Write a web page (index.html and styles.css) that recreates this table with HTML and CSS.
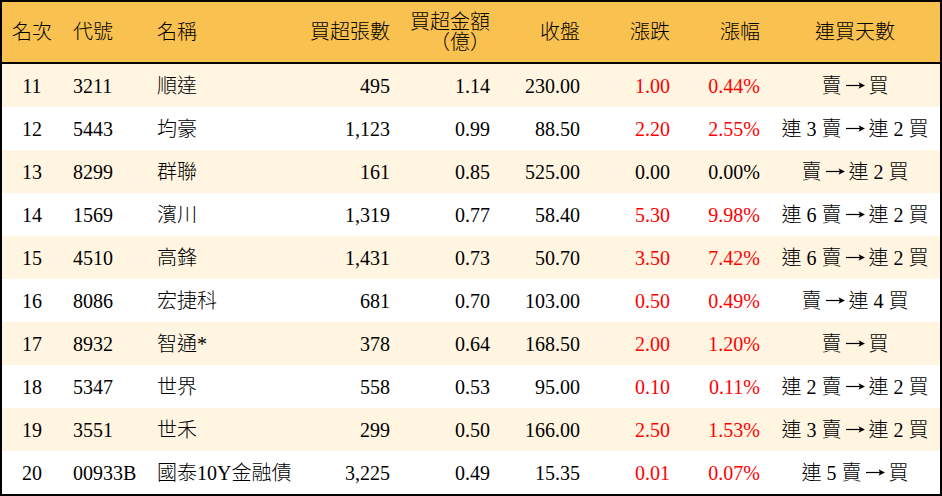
FILE: index.html
```html
<!DOCTYPE html>
<html lang="zh-Hant">
<head>
<meta charset="utf-8">
<title>買超排行</title>
<link rel="stylesheet" href="styles.css">
</head>
<body>
<div class="frame">
<table class="rank">
  <colgroup>
    <col class="w-rank"><col class="w-code"><col class="w-name"><col class="w-vol"><col class="w-amt"><col class="w-close"><col class="w-chg"><col class="w-pct"><col class="w-days">
  </colgroup>
  <thead>
    <tr>
      <th class="c">名次</th>
      <th class="l">代號</th>
      <th class="l">名稱</th>
      <th class="r">買超張數</th>
      <th class="r">買超金額<br>（億）</th>
      <th class="r">收盤</th>
      <th class="r">漲跌</th>
      <th class="r">漲幅</th>
      <th class="c">連買天數</th>
    </tr>
  </thead>
  <tbody>
    <tr class="odd"><td class="c">11</td><td class="l">3211</td><td class="l">順達</td><td class="r">495</td><td class="r">1.14</td><td class="r">230.00</td><td class="r up">1.00</td><td class="r up">0.44%</td><td class="c">賣<svg class="arrow" viewBox="0 0 19 8" aria-label="→"><path d="M0 4.5H15" stroke="#000" stroke-width="1.2"/><path d="M12.5 1.2L19 4.5L12.5 7.8L14 4.5Z" fill="#000"/></svg>買</td></tr>
    <tr><td class="c">12</td><td class="l">5443</td><td class="l">均豪</td><td class="r">1,123</td><td class="r">0.99</td><td class="r">88.50</td><td class="r up">2.20</td><td class="r up">2.55%</td><td class="c">連 3 賣<svg class="arrow" viewBox="0 0 19 8" aria-label="→"><path d="M0 4.5H15" stroke="#000" stroke-width="1.2"/><path d="M12.5 1.2L19 4.5L12.5 7.8L14 4.5Z" fill="#000"/></svg>連 2 買</td></tr>
    <tr class="odd"><td class="c">13</td><td class="l">8299</td><td class="l">群聯</td><td class="r">161</td><td class="r">0.85</td><td class="r">525.00</td><td class="r">0.00</td><td class="r">0.00%</td><td class="c">賣<svg class="arrow" viewBox="0 0 19 8" aria-label="→"><path d="M0 4.5H15" stroke="#000" stroke-width="1.2"/><path d="M12.5 1.2L19 4.5L12.5 7.8L14 4.5Z" fill="#000"/></svg>連 2 買</td></tr>
    <tr><td class="c">14</td><td class="l">1569</td><td class="l">濱川</td><td class="r">1,319</td><td class="r">0.77</td><td class="r">58.40</td><td class="r up">5.30</td><td class="r up">9.98%</td><td class="c">連 6 賣<svg class="arrow" viewBox="0 0 19 8" aria-label="→"><path d="M0 4.5H15" stroke="#000" stroke-width="1.2"/><path d="M12.5 1.2L19 4.5L12.5 7.8L14 4.5Z" fill="#000"/></svg>連 2 買</td></tr>
    <tr class="odd"><td class="c">15</td><td class="l">4510</td><td class="l">高鋒</td><td class="r">1,431</td><td class="r">0.73</td><td class="r">50.70</td><td class="r up">3.50</td><td class="r up">7.42%</td><td class="c">連 6 賣<svg class="arrow" viewBox="0 0 19 8" aria-label="→"><path d="M0 4.5H15" stroke="#000" stroke-width="1.2"/><path d="M12.5 1.2L19 4.5L12.5 7.8L14 4.5Z" fill="#000"/></svg>連 2 買</td></tr>
    <tr><td class="c">16</td><td class="l">8086</td><td class="l">宏捷科</td><td class="r">681</td><td class="r">0.70</td><td class="r">103.00</td><td class="r up">0.50</td><td class="r up">0.49%</td><td class="c">賣<svg class="arrow" viewBox="0 0 19 8" aria-label="→"><path d="M0 4.5H15" stroke="#000" stroke-width="1.2"/><path d="M12.5 1.2L19 4.5L12.5 7.8L14 4.5Z" fill="#000"/></svg>連 4 買</td></tr>
    <tr class="odd"><td class="c">17</td><td class="l">8932</td><td class="l">智通*</td><td class="r">378</td><td class="r">0.64</td><td class="r">168.50</td><td class="r up">2.00</td><td class="r up">1.20%</td><td class="c">賣<svg class="arrow" viewBox="0 0 19 8" aria-label="→"><path d="M0 4.5H15" stroke="#000" stroke-width="1.2"/><path d="M12.5 1.2L19 4.5L12.5 7.8L14 4.5Z" fill="#000"/></svg>買</td></tr>
    <tr><td class="c">18</td><td class="l">5347</td><td class="l">世界</td><td class="r">558</td><td class="r">0.53</td><td class="r">95.00</td><td class="r up">0.10</td><td class="r up">0.11%</td><td class="c">連 2 賣<svg class="arrow" viewBox="0 0 19 8" aria-label="→"><path d="M0 4.5H15" stroke="#000" stroke-width="1.2"/><path d="M12.5 1.2L19 4.5L12.5 7.8L14 4.5Z" fill="#000"/></svg>連 2 買</td></tr>
    <tr class="odd"><td class="c">19</td><td class="l">3551</td><td class="l">世禾</td><td class="r">299</td><td class="r">0.50</td><td class="r">166.00</td><td class="r up">2.50</td><td class="r up">1.53%</td><td class="c">連 3 賣<svg class="arrow" viewBox="0 0 19 8" aria-label="→"><path d="M0 4.5H15" stroke="#000" stroke-width="1.2"/><path d="M12.5 1.2L19 4.5L12.5 7.8L14 4.5Z" fill="#000"/></svg>連 2 買</td></tr>
    <tr><td class="c">20</td><td class="l">00933B</td><td class="l">國泰10Y金融債</td><td class="r">3,225</td><td class="r">0.49</td><td class="r">15.35</td><td class="r up">0.01</td><td class="r up">0.07%</td><td class="c">連 5 賣<svg class="arrow" viewBox="0 0 19 8" aria-label="→"><path d="M0 4.5H15" stroke="#000" stroke-width="1.2"/><path d="M12.5 1.2L19 4.5L12.5 7.8L14 4.5Z" fill="#000"/></svg>買</td></tr>
  </tbody>
</table>
</div>
</body>
</html>
```

FILE: styles.css
```css
html, body {
  margin: 0;
  padding: 0;
  background: #ffffff;
}

.frame {
  width: 938px;
  border: 2px solid #000000;
}

.rank {
  width: 938px;
  table-layout: fixed;
  border-collapse: separate;
  border-spacing: 0;
  font-family: "Liberation Serif", "Noto Sans CJK TC", serif;
  font-size: 20px;
  font-weight: 300;
  color: #000000;
}

.w-rank { width: 60px; }
.w-code { width: 84px; }
.w-name { width: 154px; }
.w-vol { width: 100px; }
.w-amt { width: 100px; }
.w-close { width: 90px; }
.w-chg { width: 90px; }
.w-pct { width: 90px; }
.w-days { width: 170px; }

.rank th {
  background: #f9c150;
  font-weight: 300;
  height: 60px;
  line-height: 20px;
  padding: 0 10px;
  border-bottom: 2px solid #000000;
  white-space: nowrap;
}

.rank td {
  height: 43px;
  line-height: 20px;
  padding: 0 10px;
  white-space: nowrap;
}

.rank tbody tr {
  background: #ffffff;
}

.rank tbody tr.odd {
  background: #fff5e1;
}

.rank .c { text-align: center; padding: 0; }
.rank .l { text-align: left; padding-left: 11px; padding-right: 0; }
.rank .r { text-align: right; padding-left: 0; padding-right: 10px; }

.rank .up { color: #ff0000; }

.arrow {
  display: inline-block;
  width: 19px;
  height: 8px;
  margin: 0 4px;
  vertical-align: 4px;
}
```
